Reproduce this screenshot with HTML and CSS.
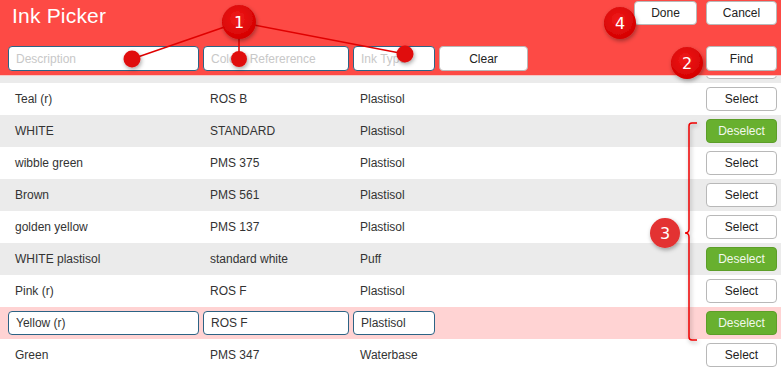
FILE: index.html
```html
<!DOCTYPE html>
<html lang="en">
<head>
    <meta charset="UTF-8">
    <title>Ink Picker</title>
    <link rel="stylesheet" href="styles.css">
</head>
<body>
    <div class="page">
        <header class="picker-header">
            <div class="header-top">
                <h1 class="title">Ink Picker</h1>
                <div class="header-actions">
                    <button class="btn btn-done">Done</button>
                    <button class="btn btn-wide">Cancel</button>
                </div>
            </div>
            <div class="search-row">
                <input class="field field-desc" placeholder="Description">
                <input class="field field-ref" placeholder="Colour Refererence">
                <input class="field field-type" placeholder="Ink Type">
                <button class="btn btn-clear">Clear</button>
                <button class="btn btn-wide btn-find">Find</button>
            </div>
        </header>

        <div class="ink-list">
            <!-- row scrolled up under the header, only its bottom edge shows -->
            <div class="ink-row alt hidden-row">
                <span></span><span></span><span></span>
                <button class="btn btn-wide" aria-label="Select"></button>
            </div>
            <div class="ink-row">
                <span>Teal (r)</span><span>ROS B</span><span>Plastisol</span>
                <button class="btn btn-wide">Select</button>
            </div>
            <div class="ink-row alt">
                <span>WHITE</span><span>STANDARD</span><span>Plastisol</span>
                <button class="btn btn-wide btn-deselect">Deselect</button>
            </div>
            <div class="ink-row">
                <span>wibble green</span><span>PMS 375</span><span>Plastisol</span>
                <button class="btn btn-wide">Select</button>
            </div>
            <div class="ink-row alt">
                <span>Brown</span><span>PMS 561</span><span>Plastisol</span>
                <button class="btn btn-wide">Select</button>
            </div>
            <div class="ink-row">
                <span>golden yellow</span><span>PMS 137</span><span>Plastisol</span>
                <button class="btn btn-wide">Select</button>
            </div>
            <div class="ink-row alt">
                <span>WHITE plastisol</span><span>standard white</span><span>Puff</span>
                <button class="btn btn-wide btn-deselect">Deselect</button>
            </div>
            <div class="ink-row">
                <span>Pink (r)</span><span>ROS F</span><span>Plastisol</span>
                <button class="btn btn-wide">Select</button>
            </div>
            <div class="ink-row editing">
                <div class="edit-fields">
                    <input class="field field-desc" value="Yellow (r)">
                    <input class="field field-ref" value="ROS F">
                    <input class="field field-type" value="Plastisol">
                </div>
                <button class="btn btn-wide btn-deselect">Deselect</button>
            </div>
            <div class="ink-row">
                <span>Green</span><span>PMS 347</span><span>Waterbase</span>
                <button class="btn btn-wide">Select</button>
            </div>
        </div>

        <!-- callout markers drawn over the screen -->
        <svg class="callouts" width="781" height="370" viewBox="0 0 781 370">
            <defs>
                <radialGradient id="dot" cx="45%" cy="40%" r="60%">
                    <stop offset="0%" stop-color="#f21b1b"/>
                    <stop offset="100%" stop-color="#d40000"/>
                </radialGradient>
                <filter id="shade" x="-50%" y="-50%" width="200%" height="200%">
                    <feDropShadow dx="1" dy="2" stdDeviation="2" flood-color="#000" flood-opacity="0.35"/>
                </filter>
            </defs>
            <g stroke="#e00000" stroke-width="1.5" fill="none">
                <line x1="239" y1="22" x2="132" y2="59"/>
                <line x1="239" y1="22" x2="239" y2="59"/>
                <line x1="239" y1="22" x2="405" y2="54"/>
            </g>
            <g fill="#e01010" filter="url(#shade)">
                <circle cx="132" cy="59" r="8.5"/>
                <circle cx="239" cy="59" r="8"/>
                <circle cx="405" cy="54" r="8.5"/>
            </g>
            <path class="bracket" filter="url(#shade)" d="M697 123 H692 Q689 123 689 126 V229 Q689 233 685 233 Q689 233 689 237 V337 Q689 340 692 340 H697"/>
            <g filter="url(#shade)">
                <circle cx="239" cy="22" r="17" fill="url(#dot)"/>
                <circle cx="687" cy="63" r="16" fill="url(#dot)"/>
                <circle cx="620" cy="23" r="16" fill="url(#dot)"/>
                <circle cx="665" cy="233" r="15" fill="#e33030"/>
            </g>
            <g class="callout-num">
                <text x="239" y="28">1</text>
                <text x="687" y="69">2</text>
                <text x="665" y="239">3</text>
                <text x="620" y="29">4</text>
            </g>
        </svg>
    </div>
</body>
</html>
```

FILE: styles.css
```css
body {
    margin: 0;
    font-family: "Liberation Sans", Arial, sans-serif;
    color: #333;
    background: #fff;
}
.page {
    position: relative;
    width: 781px;
    height: 370px;
    overflow: hidden;
}

/* Header */
.picker-header {
    position: relative;
    z-index: 2;
    height: 75px;
    background-color: #fd4a45;
    box-shadow: 0 1px 0 #f6c4c2;
}
.header-top {
    display: flex;
    justify-content: space-between;
    align-items: flex-start;
    padding: 1px 4px 0 12px;
    height: 45px;
}
.title {
    margin: 3px 0 0;
    font-size: 21px;
    font-weight: normal;
    color: #fff;
    letter-spacing: 0.2px;
}
.header-actions {
    display: flex;
    gap: 9px;
}
.search-row {
    display: flex;
    align-items: center;
    gap: 4px;
    padding: 0 4px 0 8px;
}

/* Buttons */
.btn {
    height: 24px;
    padding: 0;
    font-family: "Liberation Sans", Arial, sans-serif;
    font-size: 12px;
    color: #222;
    background: #fff;
    border: 1px solid #b8b8b8;
    border-radius: 4px;
}
.btn-wide {
    width: 71px;
}
.btn-done {
    width: 63px;
}
.btn-clear {
    width: 89px;
    height: 25px;
}
.btn-find {
    height: 25px;
    margin-left: auto;
}
.btn-deselect {
    background-color: #68b02f;
    border-color: #5c9e29;
    color: #f2f8ec;
}

/* Inputs */
.field {
    box-sizing: border-box;
    height: 25px;
    padding: 0 7px;
    font-family: "Liberation Sans", Arial, sans-serif;
    font-size: 12px;
    color: #333;
    background: #fff;
    border: 1px solid #2c6385;
    border-radius: 4px;
    outline: none;
}
.field::placeholder {
    color: #c8c8c8;
}
.field-desc {
    width: 191px;
}
.field-ref {
    width: 146px;
}
.field-type {
    width: 82px;
}

/* List */
.ink-list {
    position: relative;
    z-index: 1;
}
.ink-row {
    display: grid;
    grid-template-columns: 195px 150px 1fr 71px;
    align-items: center;
    height: 32px;
    padding: 0 4px 0 15px;
    font-size: 12px;
    background: #fff;
}
.ink-row.alt {
    background-color: #ebebeb;
}
.hidden-row {
    margin-top: -24px;
}
.ink-row.editing {
    grid-template-columns: 1fr 71px;
    padding-left: 8px;
    background-color: #ffd3d3;
}
.edit-fields {
    display: flex;
    gap: 4px;
}
.edit-fields .field {
    height: 24px;
}

/* Callouts */
.callouts {
    position: absolute;
    left: 0;
    top: 0;
    z-index: 3;
    pointer-events: none;
}
.bracket {
    fill: none;
    stroke: #ee0000;
    stroke-width: 1.5;
}
.callout-num text {
    fill: #fff;
    font-family: "DejaVu Sans", sans-serif;
    font-size: 16px;
    text-anchor: middle;
}
```
